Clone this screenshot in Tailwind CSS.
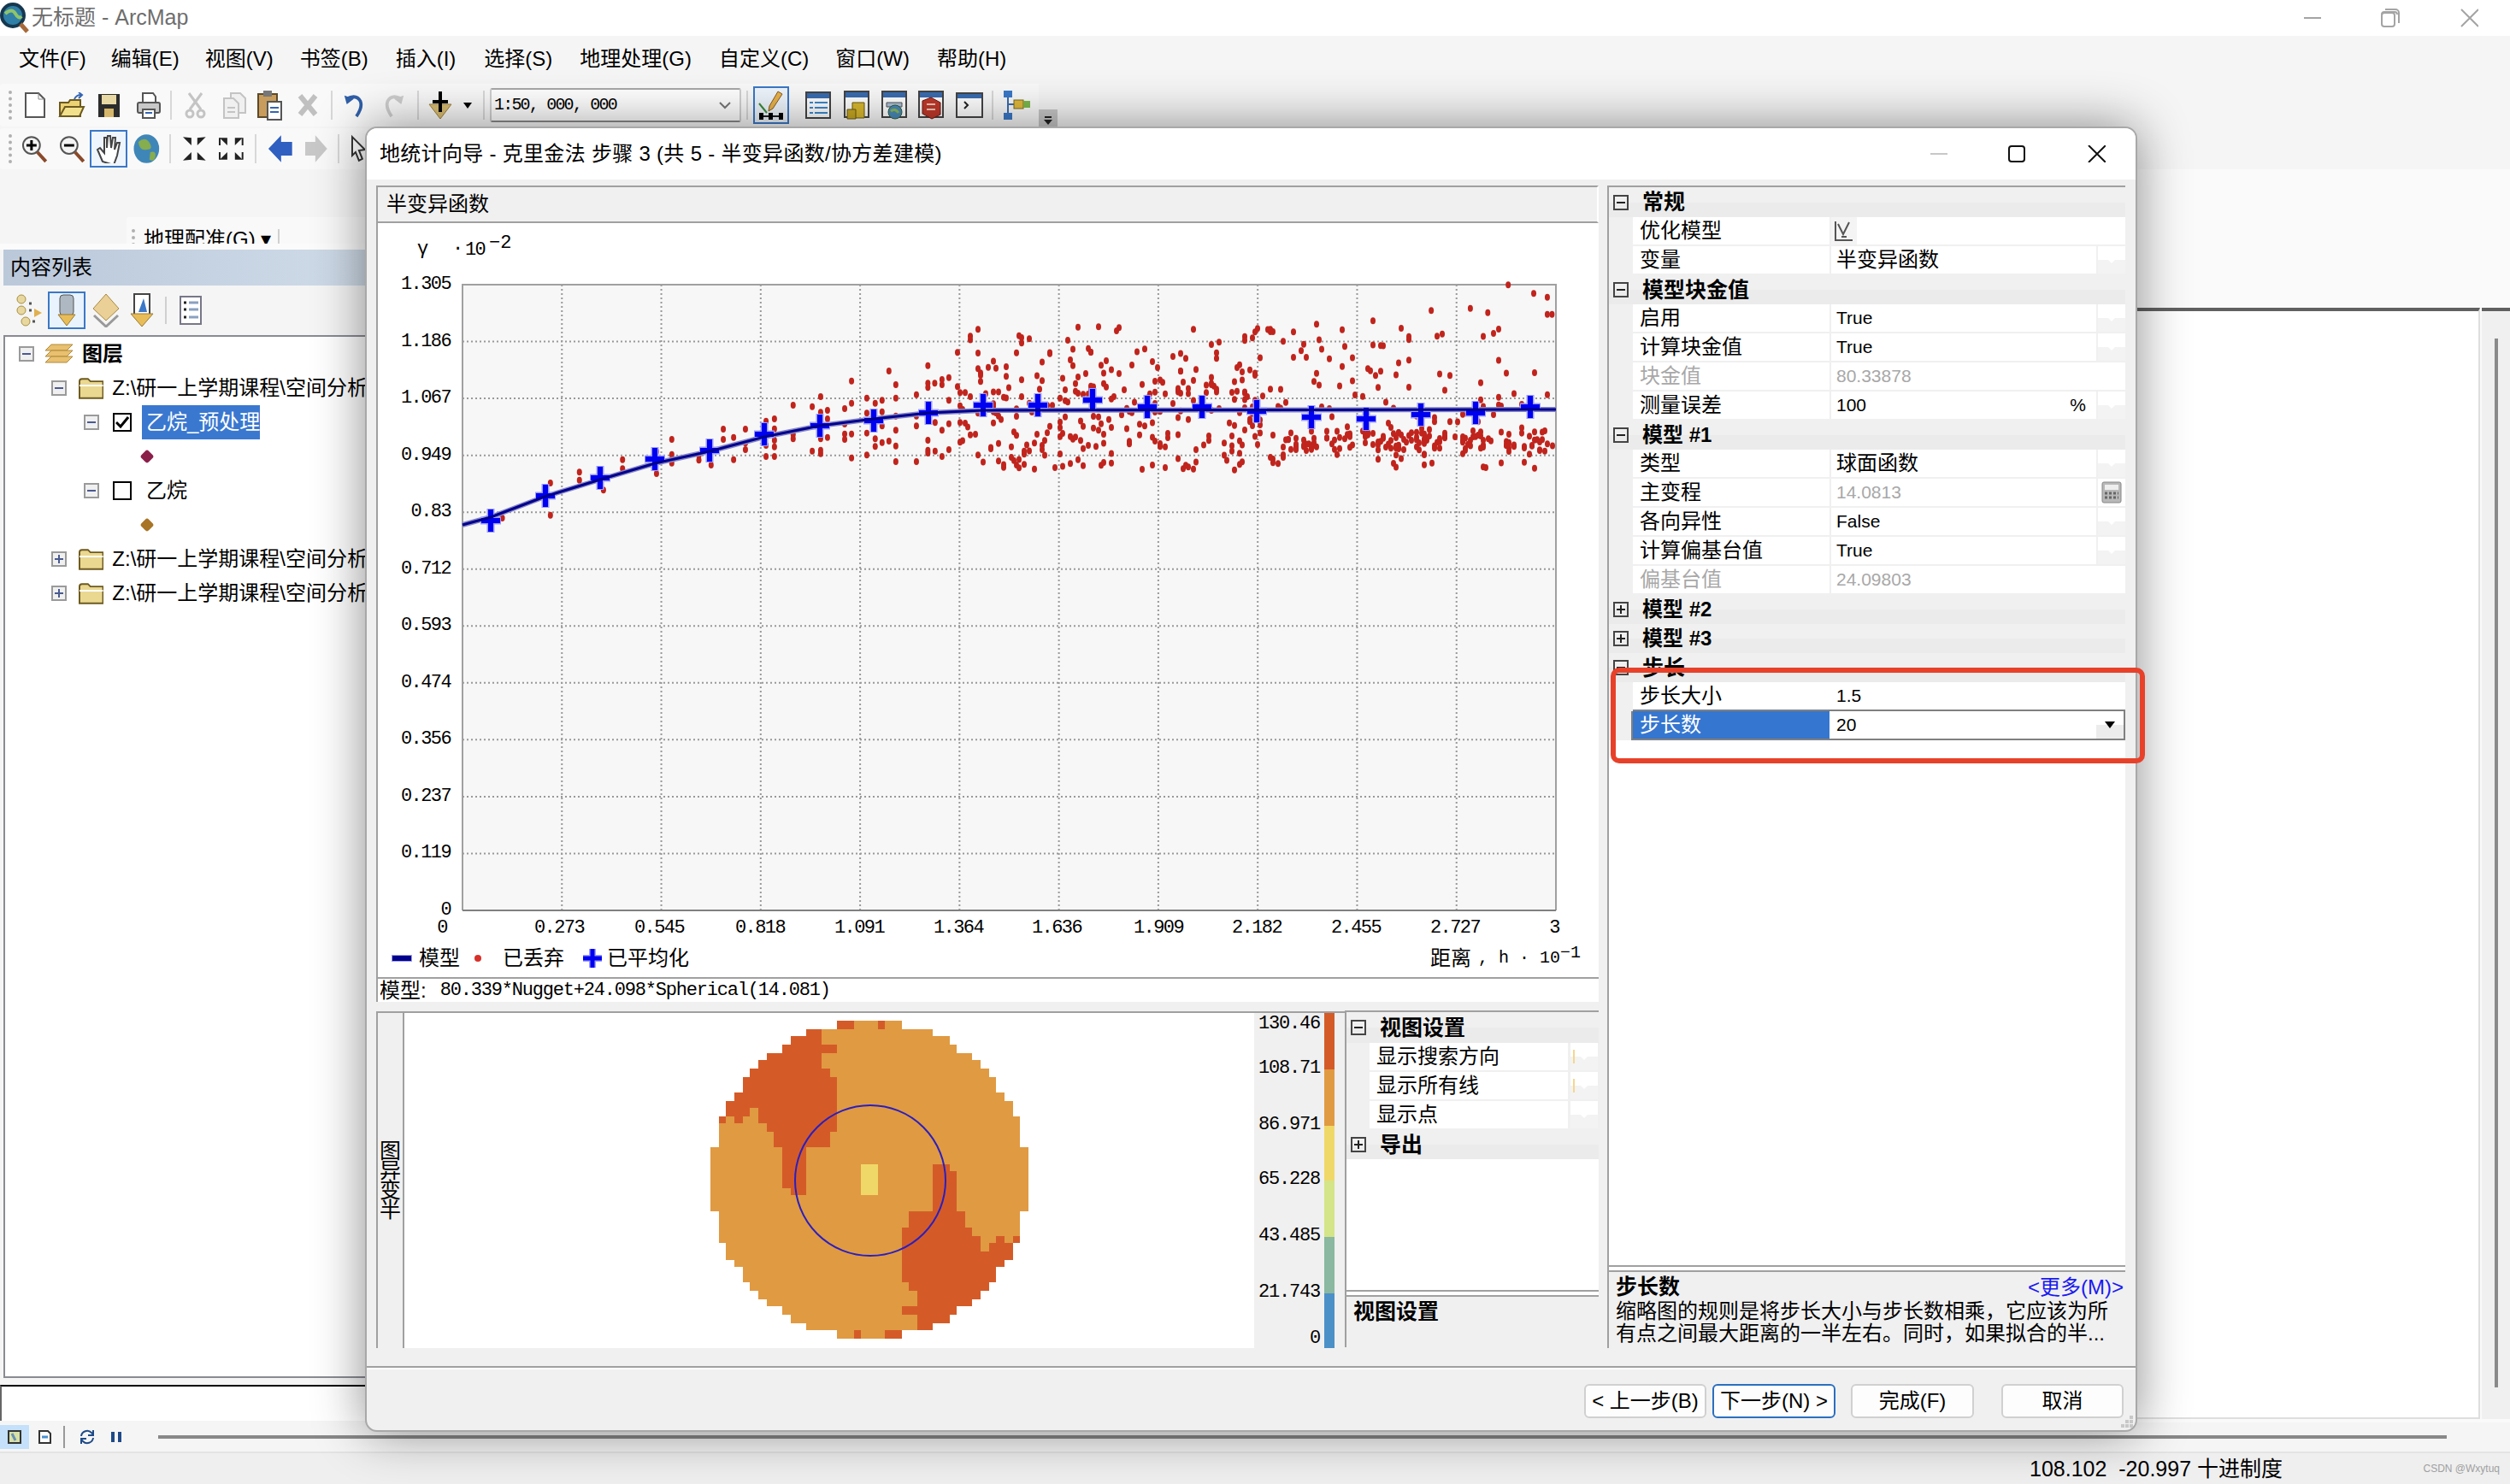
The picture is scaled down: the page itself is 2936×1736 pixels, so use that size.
<!DOCTYPE html>
<html lang="zh">
<head>
    <meta charset="UTF-8">
    <title>无标题 - ArcMap</title>
    <script src="https://cdn.jsdelivr.net/npm/@tailwindcss/browser@4"></script>
</head>
<body class="overflow-hidden bg-[#f0f0f0]">
<div class="relative flex h-[1736px] w-[2936px] flex-col overflow-hidden bg-[#f5f5f5] font-['Liberation_Sans','Noto_Sans_CJK_SC',sans-serif] text-[24px] leading-none text-black">

    <!-- title bar -->
    <div class="flex h-[42px] shrink-0 items-center bg-white pr-[37px]">
        <svg width="36" height="38" viewBox="0 0 36 38" class="shrink-0">
            <circle cx="15" cy="16" r="13" fill="#2f7fa8" stroke="#16384f" stroke-width="4"/>
            <path d="M6 14q8-7 12 0t7 3" fill="none" stroke="#8fc46a" stroke-width="4"/>
            <path d="M24 26l8 9" stroke="#a86a3a" stroke-width="5"/>
        </svg>
        <span class="mb-[2px] ml-[1px] text-[25px] text-[#6e6e6e]">无标题 - ArcMap</span>
        <svg width="204" height="22" viewBox="0 0 204 22" fill="none" stroke="#a4a4a4" stroke-width="2" class="ml-auto">
            <path d="M0 11h20"/>
            <path d="M91 7a3 3 0 0 1 3-3h12a3 3 0 0 1 3 3v0"/><path d="M95 1h12a4 4 0 0 1 4 4v12"/><rect x="91" y="5" width="15" height="16" rx="3"/>
            <path d="M184 1l20 20M204 1l-20 20"/>
        </svg>
    </div>

    <!-- menu -->
    <div class="flex h-[54px] shrink-0 items-center pl-[22px]">
        <span>文件(F)</span><span class="ml-[29px]">编辑(E)</span><span class="ml-[30px]">视图(V)</span><span class="ml-[31px]">书签(B)</span><span class="ml-[32px]">插入(I)</span><span class="ml-[33px]">选择(S)</span><span class="ml-[32px]">地理处理(G)</span><span class="ml-[32px]">自定义(C)</span><span class="ml-[31px]">窗口(W)</span><span class="ml-[32px]">帮助(H)</span>
    </div>

    <!-- standard toolbar -->
    <div class="mt-[2px] flex h-[50px] w-[1237px] shrink-0 items-center rounded-[3px] bg-[linear-gradient(90deg,#f9f9f9_1215px,transparent_1215px)] pl-[10px]">
        <span class="h-[34px] w-[4px] border-l-4 border-dotted border-[#b0b0b0]"></span>
        <svg width="26" height="30" viewBox="0 0 26 30" class="ml-[14px]"><path d="M2 1h15l7 7v21H2z" fill="#fff" stroke="#555" stroke-width="2"/><path d="M17 1v7h7" fill="none" stroke="#888"/></svg>
        <svg width="32" height="30" viewBox="0 0 32 30" class="ml-[14px]"><path d="M2 12h10l2-3h12v19H2z" fill="#ecd272" stroke="#6d5a20" stroke-width="2"/><path d="M2 28l6-11h22l-5 11z" fill="#f3e08c" stroke="#6d5a20" stroke-width="2"/><path d="M19 8q2-5 8-5M24 0l4 3-4 4" fill="none" stroke="#3565b5" stroke-width="2"/></svg>
        <svg width="27" height="30" viewBox="0 0 27 30" class="ml-[14px]"><path d="M1 2h25v27H1z" fill="#2c2c2c"/><rect x="5" y="3" width="17" height="11" fill="#e8d9a4"/><rect x="8" y="19" width="11" height="10" fill="#d6b66a"/></svg>
        <svg width="28" height="32" viewBox="0 0 28 32" class="ml-[19px]"><path d="M7 2h12l3 4v8H7z" fill="#fff" stroke="#555" stroke-width="2"/><rect x="1" y="13" width="26" height="12" rx="2" fill="#c8c8c8" stroke="#555" stroke-width="2"/><rect x="7" y="21" width="14" height="10" fill="#fff" stroke="#555" stroke-width="2"/><path d="M10 25h8" stroke="#3565b5" stroke-width="2"/></svg>
        <span class="ml-[11px] h-[34px] w-[2px] bg-[#d8d8d8]"></span>
        <svg width="27" height="32" viewBox="0 0 27 32" class="ml-[14px]" fill="none" stroke="#c4c4c4" stroke-width="3"><path d="M6 2l14 19M21 2L7 21"/><circle cx="7" cy="26" r="4"/><circle cx="20" cy="26" r="4"/></svg>
        <svg width="28" height="32" viewBox="0 0 28 32" class="ml-[18px]" fill="#f0f0f0" stroke="#c4c4c4" stroke-width="2"><path d="M10 2h11l6 6v17H10z"/><path d="M2 8h11l6 6v17H2z"/><path d="M6 19h9M6 24h9"/></svg>
        <svg width="30" height="36" viewBox="0 0 30 36" class="ml-[12px]"><rect x="2" y="5" width="22" height="27" fill="#c89c5c" stroke="#5c4a2a" stroke-width="2"/><rect x="8" y="1" width="10" height="7" fill="#777"/><path d="M13 14h16v21H13z" fill="#fff" stroke="#555" stroke-width="2"/><path d="M16 21h10M16 26h10" stroke="#3565b5" stroke-width="2"/></svg>
        <svg width="24" height="26" viewBox="0 0 24 26" class="ml-[18px]"><path d="M3 2l18 22M21 2L3 24" stroke="#c0c0c0" stroke-width="6"/></svg>
        <span class="ml-[15px] h-[34px] w-[2px] bg-[#d8d8d8]"></span>
        <svg width="30" height="30" viewBox="0 0 30 32" class="ml-[11px]"><path d="M5 8q12-6 17 3q3 8-5 19" fill="none" stroke="#2f5fa8" stroke-width="4"/><path d="M2 4l3 11 9-7z" fill="#2f5fa8"/></svg>
        <svg width="30" height="30" viewBox="0 0 30 32" class="ml-[15px]"><path d="M25 8Q13 2 8 11q-3 8 5 19" fill="none" stroke="#cdcdcd" stroke-width="4"/><path d="M28 4l-3 11-9-7z" fill="#cdcdcd"/></svg>
        <span class="ml-[13px] h-[34px] w-[2px] bg-[#d8d8d8]"></span>
        <svg width="30" height="32" viewBox="0 0 30 32" class="ml-[10px]"><path d="M2 15h26L15 32z" fill="#d9bd72" stroke="#a08040"/><path d="M15 0v24M6 12h18" stroke="#000" stroke-width="4"/></svg>
        <span class="ml-[12px] h-0 w-0 border-x-[5px] border-t-[7px] border-x-transparent border-t-black"></span>
        <span class="ml-[13px] h-[34px] w-[2px] bg-[#d8d8d8]"></span>
        <div class="ml-[6px] flex h-[40px] w-[294px] items-center justify-between rounded-[3px] border-2 border-b-[#8a8a8a] border-l-[#cfcfcf] border-r-[#cfcfcf] border-t-[#a8a8a8] bg-white pl-[3px] pr-[10px] font-['Liberation_Mono',monospace] text-[20px] tracking-[-1.8px]">
            <span>1:50, 000, 000</span>
            <svg width="14" height="9" viewBox="0 0 14 9" fill="none" stroke="#777" stroke-width="2"><path d="M1 1l6 6 6-6"/></svg>
        </div>
        <span class="ml-[6px] h-[34px] w-[2px] bg-[#d8d8d8]"></span>
        <div class="ml-[6px] flex h-[44px] w-[42px] items-center justify-center border-2 border-[#3a78c8] bg-[#eef5fc]">
            <svg width="32" height="36" viewBox="0 0 32 36"><path d="M2 31h28" stroke="#222" stroke-width="2"/><rect x="2" y="27" width="5" height="8"/><rect x="13" y="27" width="5" height="8"/><rect x="25" y="27" width="5" height="8"/><path d="M24 2l5 3-11 17-5 3 1-6z" fill="#e8b34a" stroke="#8a5a20"/><path d="M2 16l9 11" stroke="#3a8a3a" stroke-width="2"/></svg>
        </div>
        <svg width="30" height="32" viewBox="0 0 30 32" class="ml-[19px]"><rect x="1" y="1" width="28" height="30" fill="#fff" stroke="#444" stroke-width="2"/><rect x="2" y="2" width="26" height="6" fill="#3a6cb0"/><path d="M5 13h4M5 19h4M5 25h4M11 13h15M11 19h15M11 25h15" stroke="#3a8ad0" stroke-width="2"/></svg>
        <svg width="30" height="34" viewBox="0 0 30 34" class="ml-[15px]"><rect x="1" y="1" width="28" height="30" fill="#fff" stroke="#444" stroke-width="2"/><rect x="2" y="2" width="26" height="6" fill="#3a6cb0"/><path d="M10 14h14v18H10z" fill="#d9b82e" stroke="#6a5a10"/><path d="M4 22h10v11H4z" fill="#c8a822" stroke="#6a5a10"/></svg>
        <svg width="32" height="34" viewBox="0 0 32 34" class="ml-[13px]"><rect x="2" y="1" width="28" height="30" fill="#fff" stroke="#444" stroke-width="2"/><rect x="3" y="2" width="26" height="6" fill="#3a6cb0"/><path d="M7 14h18v5H7z" fill="#aac0d8" stroke="#555"/><circle cx="17" cy="25" r="8" fill="#4a8ab8" stroke="#2f5f3a"/><path d="M12 24q5-4 9 2" stroke="#8ab85a" stroke-width="3" fill="none"/></svg>
        <svg width="32" height="34" viewBox="0 0 32 34" class="ml-[11px]"><rect x="2" y="1" width="28" height="30" fill="#fff" stroke="#444" stroke-width="2"/><rect x="3" y="2" width="26" height="6" fill="#3a6cb0"/><path d="M6 12l10-4 11 6v14l-10 5-11-6z" fill="#c0392b" stroke="#6a1a14"/><path d="M11 16h10M11 22h10" stroke="#f0c8b8" stroke-width="2"/></svg>
        <svg width="32" height="30" viewBox="0 0 32 30" class="ml-[13px]"><rect x="1" y="1" width="30" height="28" fill="#fff" stroke="#444" stroke-width="2"/><rect x="2" y="2" width="28" height="5" fill="#3a6cb0"/><path d="M10 11l4 4-4 4" fill="none" stroke="#222" stroke-width="2"/></svg>
        <span class="ml-[10px] h-[34px] w-[2px] bg-[#d8d8d8]"></span>
        <svg width="34" height="36" viewBox="0 0 34 36" class="ml-[10px]"><path d="M7 2v28M7 17h18" stroke="#3a6cb0" stroke-width="2"/><rect x="2" y="1" width="10" height="8" fill="#3a78c8"/><rect x="2" y="27" width="10" height="8" fill="#3a78c8"/><rect x="14" y="12" width="11" height="10" fill="#e0b83c" stroke="#7a6a1a"/><rect x="25" y="13" width="8" height="8" fill="#7ab84c"/></svg>
        <div class="ml-[9px] flex h-[20px] w-[22px] flex-col items-center justify-end gap-[2px] self-end bg-[#c8c8c8] pb-[2px]">
            <span class="h-[2px] w-[8px] bg-[#222]"></span>
            <span class="h-0 w-0 border-x-[5px] border-t-[6px] border-x-transparent border-t-[#222]"></span>
        </div>
    </div>

    <!-- tools toolbar -->
    <div class="mt-[2px] flex h-[48px] w-[430px] shrink-0 items-center rounded-[3px] bg-[#f9f9f9] pl-[10px]">
        <span class="h-[34px] w-[4px] border-l-4 border-dotted border-[#b0b0b0]"></span>
        <svg width="32" height="34" viewBox="0 0 32 34" class="ml-[10px]"><circle cx="13" cy="13" r="10" fill="#f4f4f4" stroke="#555" stroke-width="2"/><path d="M13 7v12M7 13h12" stroke="#000" stroke-width="3"/><path d="M20 21l10 11" stroke="#8a4a2a" stroke-width="4"/></svg>
        <svg width="32" height="34" viewBox="0 0 32 34" class="ml-[12px]"><circle cx="13" cy="13" r="10" fill="#f4f4f4" stroke="#555" stroke-width="2"/><path d="M7 13h12" stroke="#000" stroke-width="3"/><path d="M20 21l10 11" stroke="#8a4a2a" stroke-width="4"/></svg>
        <div class="ml-[6px] flex h-[44px] w-[44px] items-center justify-center border-2 border-[#3a78c8] bg-[#eef5fc]">
            <svg width="30" height="34" viewBox="0 0 30 34" fill="#fff" stroke="#444" stroke-width="2"><path d="M8 32L2 18l3-2 5 6V4h3v12l1-14h3l1 14 2-12h3l-1 14 3-8h3l-3 15-4 11z"/></svg>
        </div>
        <svg width="31" height="36" viewBox="0 0 31 36" class="ml-[7px]"><ellipse cx="15.500" cy="18" rx="15" ry="17" fill="#3f86b8"/><path d="M6 10q8-7 13 1t-3 8q-9 2-10-9M20 22q7-2 6 5t-7 4z" fill="#86ad4e"/></svg>
        <span class="ml-[11px] h-[34px] w-[2px] bg-[#d8d8d8]"></span>
        <svg width="29" height="30" viewBox="0 0 29 30" class="ml-[13px]"><path d="M1 1l10 10V2zM28 1L18 11V2zM1 29l10-10v9zM28 29L18 19v9z" fill="#222"/></svg>
        <svg width="31" height="30" viewBox="0 0 31 30" class="ml-[14px]"><path d="M11 11L2 2h9zM20 11l9-9h-9zM11 19l-9 9h9zM20 19l9 9h-9z" fill="#222"/><path d="M2 2v9M29 2v9M2 19v9M29 19v9" stroke="#222" stroke-width="2"/></svg>
        <span class="ml-[12px] h-[34px] w-[2px] bg-[#d8d8d8]"></span>
        <svg width="30" height="34" viewBox="0 0 30 34" class="ml-[13px]"><path d="M16 1v8h13v16H16v8L1 17z" fill="#2f5fc0"/></svg>
        <svg width="28" height="34" viewBox="0 0 28 34" class="ml-[13px]"><path d="M13 1v8H1v16h12v8l14-16z" fill="#c8c8c8"/></svg>
        <span class="ml-[12px] h-[34px] w-[2px] bg-[#d8d8d8]"></span>
        <svg width="20" height="34" viewBox="0 0 20 34" class="ml-[13px]"><path d="M2 3l15 15-7 1 4 10-4 2-4-10-4 4z" fill="#fff" stroke="#333" stroke-width="2"/></svg>
    </div>

    <!-- body under the toolbars -->
    <div class="flex h-[1466px] shrink-0">
        <!-- table of contents -->
        <div class="flex w-[430px] shrink-0 flex-col">
            <div class="ml-[148px] mt-[56px] flex h-[31px] shrink-0 overflow-hidden rounded-t-[3px] bg-[#f9f9f9] pl-[6px] pt-[14px]">
                <span class="h-[28px] w-[4px] border-l-4 border-dotted border-[#b0b0b0]"></span>
                <span class="ml-[10px] whitespace-nowrap">地理配准(G) ▾</span>
                <span class="ml-[8px] h-[24px] w-[2px] bg-[#d0d0d0]"></span>
            </div>
            <div class="h-[7px] shrink-0 bg-[#fbfbfb]"></div>
            <div class="ml-[4px] flex h-[42px] shrink-0 items-center bg-[linear-gradient(90deg,#bac8da,#cfdbe8)] pl-[8px]">内容列表</div>
            <div class="flex h-[58px] shrink-0 items-center bg-[#f5f5f5] pl-[18px]">
                <svg width="32" height="40" viewBox="0 0 32 40"><circle cx="7" cy="7" r="5" fill="#e8d8a0" stroke="#a89040"/><circle cx="7" cy="20" r="5" fill="#e8d8a0" stroke="#a89040"/><circle cx="12" cy="33" r="5" fill="#e8d8a0" stroke="#a89040"/><path d="M16 12h3M16 20h3M20 33h3" stroke="#555" stroke-width="3"/><path d="M22 18l9 5-9 5z" fill="#e0b050"/></svg>
                <div class="ml-[6px] flex h-[44px] w-[44px] items-center justify-center border-2 border-[#3a78c8] bg-[#e8f3fd]">
                    <svg width="28" height="38" viewBox="0 0 28 38"><rect x="6" y="1" width="16" height="24" rx="4" fill="#aeb8c2" stroke="#555"/><path d="M4 24h20L14 37z" fill="#e8bd58" stroke="#9a7a30"/></svg>
                </div>
                <svg width="32" height="40" viewBox="0 0 32 40" class="ml-[8px]"><path d="M16 1l15 17-15 14L1 18z" fill="#ead096" stroke="#a88a40"/><path d="M2 26l14 13 14-13" fill="none" stroke="#999" stroke-width="3"/></svg>
                <svg width="32" height="40" viewBox="0 0 32 40" class="ml-[10px]"><rect x="7" y="1" width="18" height="24" fill="#fff" stroke="#444" stroke-width="2"/><path d="M12 22l6-16 4 16z" fill="#3a78c8"/><path d="M3 24h26L16 39z" fill="#e8bd58" stroke="#9a7a30"/></svg>
                <span class="ml-[11px] h-[32px] w-[2px] bg-[#d0d0d0]"></span>
                <svg width="26" height="34" viewBox="0 0 26 34" class="ml-[15px]"><rect x="1" y="1" width="24" height="32" fill="#fff" stroke="#778" stroke-width="2"/><path d="M5 8h3M5 16h3M5 25h3" stroke="#222" stroke-width="3"/><path d="M11 8h11M11 16h11M11 25h11" stroke="#8aa0c0" stroke-width="3"/></svg>
            </div>
            <div class="ml-[4px] h-[1220px] shrink-0 overflow-hidden border-2 border-r-0 border-[#8a8a94] bg-white">
                <div class="flex h-[40px] items-center whitespace-nowrap pl-[16px]">
                    <span class="flex h-[18px] w-[18px] items-center justify-center border-2 border-[#9a9a9a] bg-[#f0f0f0]"><span class="h-[2px] w-[10px] bg-[#4a5a90]"></span></span>
                    <svg width="34" height="28" viewBox="0 0 34 28" class="ml-[12px]"><path d="M8 3h25l-7 7H1z" fill="#e8c070" stroke="#b08a3a"/><path d="M8 10h25l-7 7H1z" fill="#e8c070" stroke="#b08a3a"/><path d="M8 17h25l-7 7H1z" fill="#e8c070" stroke="#b08a3a"/></svg>
                    <span class="ml-[10px] font-bold">图层</span>
                </div>
                <div class="flex h-[40px] items-center whitespace-nowrap pl-[54px]">
                    <span class="flex h-[18px] w-[18px] items-center justify-center border-2 border-[#9a9a9a] bg-[#f0f0f0]"><span class="h-[2px] w-[10px] bg-[#4a5a90]"></span></span>
                    <svg width="30" height="26" viewBox="0 0 30 26" class="ml-[14px]"><path d="M1 5q0-3 3-3h7l3 3h15v20H1z" fill="#ead890" stroke="#6d5a20" stroke-width="2"/><path d="M1 10h28" stroke="#fff" stroke-width="2"/></svg>
                    <span class="ml-[10px]">Z:\研一上学期课程\空间分析</span>
                </div>
                <div class="flex h-[40px] items-center whitespace-nowrap pl-[92px]">
                    <span class="flex h-[18px] w-[18px] items-center justify-center border-2 border-[#9a9a9a] bg-[#f0f0f0]"><span class="h-[2px] w-[10px] bg-[#4a5a90]"></span></span>
                    <span class="ml-[16px] flex h-[22px] w-[22px] items-center justify-center border-2 border-black"><svg width="16" height="14" viewBox="0 0 16 14"><path d="M1 7l5 5 9-11" fill="none" stroke="#000" stroke-width="3"/></svg></span>
                    <span class="ml-[12px] flex h-[40px] w-[138px] items-center bg-[#3a78d0] pl-[5px] text-white">乙烷_预处理</span>
                </div>
                <div class="flex h-[40px] items-center pl-[160px]"><span class="h-[12px] w-[12px] rotate-45 rounded-[3px] bg-[#8a1f4a]"></span></div>
                <div class="flex h-[40px] items-center whitespace-nowrap pl-[92px]">
                    <span class="flex h-[18px] w-[18px] items-center justify-center border-2 border-[#9a9a9a] bg-[#f0f0f0]"><span class="h-[2px] w-[10px] bg-[#4a5a90]"></span></span>
                    <span class="ml-[16px] h-[22px] w-[22px] border-2 border-black"></span>
                    <span class="ml-[17px]">乙烷</span>
                </div>
                <div class="flex h-[40px] items-center pl-[160px]"><span class="h-[12px] w-[12px] rotate-45 rounded-[3px] bg-[#a87426]"></span></div>
                <div class="flex h-[40px] items-center whitespace-nowrap pl-[54px]">
                    <span class="relative flex h-[18px] w-[18px] items-center justify-center border-2 border-[#9a9a9a] bg-[#f0f0f0]"><span class="h-[2px] w-[10px] bg-[#4a5a90]"></span><span class="absolute h-[10px] w-[2px] bg-[#4a5a90]"></span></span>
                    <svg width="30" height="26" viewBox="0 0 30 26" class="ml-[14px]"><path d="M1 5q0-3 3-3h7l3 3h15v20H1z" fill="#ead890" stroke="#6d5a20" stroke-width="2"/><path d="M1 10h28" stroke="#fff" stroke-width="2"/></svg>
                    <span class="ml-[10px]">Z:\研一上学期课程\空间分析</span>
                </div>
                <div class="flex h-[40px] items-center whitespace-nowrap pl-[54px]">
                    <span class="relative flex h-[18px] w-[18px] items-center justify-center border-2 border-[#9a9a9a] bg-[#f0f0f0]"><span class="h-[2px] w-[10px] bg-[#4a5a90]"></span><span class="absolute h-[10px] w-[2px] bg-[#4a5a90]"></span></span>
                    <svg width="30" height="26" viewBox="0 0 30 26" class="ml-[14px]"><path d="M1 5q0-3 3-3h7l3 3h15v20H1z" fill="#ead890" stroke="#6d5a20" stroke-width="2"/><path d="M1 10h28" stroke="#fff" stroke-width="2"/></svg>
                    <span class="ml-[10px]">Z:\研一上学期课程\空间分析</span>
                </div>
            </div>
            <div class="mt-[8px] h-[42px] shrink-0 border-l-2 border-t-2 border-l-[#666] border-t-black bg-white"></div>
        </div>
        <!-- map area -->
        <div class="flex min-w-0 flex-1 flex-col bg-[#fafafa]">
            <div class="mt-[162px] flex h-[1300px] shrink-0">
                <div class="w-[2471px] shrink-0 border-b-2 border-r-2 border-t-4 border-b-[#dedede] border-r-[#dedede] border-t-[#606060] bg-white"></div>
                <div class="ml-[2px] flex-1 border-t-4 border-t-[#606060] bg-[#f0f0f0] pl-[15px] pt-[32px]"><div class="h-[1227px] w-[4px] bg-[#8a8a8a]"></div></div>
            </div>
        </div>
    </div>

    <!-- layout / data view bar -->
    <div class="flex h-[36px] shrink-0 items-center border-b-2 border-b-[#e4e4e4]">
        <div class="flex h-[28px] w-[34px] items-center justify-center border-2 border-[#c4e0fa] bg-[#c4e0fa]"><svg width="16" height="16" viewBox="0 0 16 16"><rect x="1" y="1" width="14" height="14" fill="#d8e0a8" stroke="#333" stroke-width="2"/><path d="M5 4l4 8" stroke="#6a90b0" stroke-width="3"/></svg></div>
        <svg width="15" height="16" viewBox="0 0 15 16" class="ml-[11px]"><path d="M1 1h10l3 3v11H1z" fill="#fff" stroke="#333" stroke-width="2"/><path d="M4 8h7" stroke="#4a90d0" stroke-width="3"/></svg>
        <span class="ml-[14px] h-[26px] w-[2px] bg-[#999]"></span>
        <svg width="18" height="18" viewBox="0 0 18 18" fill="none" stroke="#1f4a88" stroke-width="2" class="ml-[17px]"><path d="M2 8a7 7 0 0 1 12-4l2 2M16 10a7 7 0 0 1-12 4l-2-2"/><path d="M16 1v6h-6M2 17v-6h6"/></svg>
        <span class="ml-[19px] h-[12px] w-[4px] bg-[#1f4a88]"></span><span class="ml-[4px] h-[12px] w-[4px] bg-[#1f4a88]"></span>
        <div class="ml-[43px] h-[4px] w-[2677px] bg-[#888]"></div>
    </div>

    <!-- status bar -->
    <div class="flex flex-1 items-center bg-[#efefef] pl-[2374px] pr-[12px]">
        <span class="whitespace-nowrap text-[25px]">108.102&nbsp; -20.997 十进制度</span>
        <span class="ml-auto text-[12px] text-[#a0a0a0]">CSDN @Wxytuq</span>
    </div>

    <!-- geostatistical wizard dialog -->
    <div class="absolute left-[427px] top-[148px] flex h-[1527px] w-[2073px] flex-col overflow-hidden rounded-[14px] border-2 border-[#a8a8a8] bg-[#f0f0f0] shadow-[0_0_60px_rgba(0,0,0,0.45)]">
        <div class="flex h-[60px] shrink-0 items-center bg-white pl-[15px]">
            <span class="tracking-[0.3px]">地统计向导 - 克里金法 步骤 3 (共 5 - 半变异函数/协方差建模)</span>
            <svg width="205" height="20" viewBox="0 0 205 20" fill="none" stroke="#111" stroke-width="2" class="ml-auto mr-[35px]"><path d="M0 10h20" stroke="#c8c8c8"/><rect x="92" y="1" width="18" height="18" rx="3"/><path d="M185 0l20 20M205 0l-20 20"/></svg>
        </div>

        <div class="mt-[7px] flex h-[1360px] shrink-0 pl-[11px]">
            <!-- left column -->
            <div class="flex w-[1430px] shrink-0 flex-col">
                <div class="flex h-[44px] shrink-0 items-center border-2 border-[#a0a0a0] border-r-white bg-[#f0f0f0] pl-[10px]">半变异函数</div>
                <div class="w-[1430px] shrink-0 border-l-2 border-[#a0a0a0] bg-white">
                    <svg id="chart" width="1428" height="837" viewBox="442 261 1428 837" class="block"></svg>
                    <div class="flex h-[45px] items-center whitespace-nowrap">
                        <span class="ml-[17px] h-[6px] w-[22px] bg-[#00008c] outline outline-[#a0a0e0]"></span>
                        <span class="ml-[9px]">模型</span>
                        <span class="ml-[17px] h-[8px] w-[8px] rounded-full bg-[#d8302a]"></span>
                        <span class="ml-[25px]">已丢弃</span>
                        <svg width="24" height="24" viewBox="0 0 24 24" class="ml-[21px]"><path d="M12 1v22M1 12h22" stroke="#a0a0ff" stroke-width="8"/><path d="M12 1v22M1 12h22" stroke="#0000f0" stroke-width="5"/></svg>
                        <span class="ml-[5px]">已平均化</span>
                        <span class="ml-[867px]">距离</span>
                        <span class="ml-[8px] font-['Liberation_Mono',monospace] text-[20px]">, h · 10</span>
                        <span class="mb-[12px] font-['Liberation_Mono',monospace] text-[20px]">&minus;1</span>
                    </div>
                </div>
                <div class="flex h-[29px] shrink-0 items-center whitespace-nowrap border-l-2 border-t-2 border-l-[#a0a0a0] border-t-[#a0a0a0] bg-white pl-[2px]">
                    <span>模型:</span>
                    <span class="ml-[16px] font-['Liberation_Mono',monospace] text-[22px] tracking-[-1.2px]">80.339*Nugget+24.098*Spherical(14.081)</span>
                </div>
                <div class="mt-[11px] flex h-[394px] shrink-0 border-t-2 border-[#a0a0a0]">
                    <div class="flex w-[33px] shrink-0 flex-col items-center justify-center border-x-2 border-l-[#a0a0a0] border-r-[#a0a0a0] bg-[#f0f0f0] text-[25px] leading-[23px]">
                        <span>图</span><span>异</span><span>变</span><span>半</span>
                    </div>
                    <svg id="map" width="994" height="392" viewBox="474 1185 994 392" class="block shrink-0 bg-white"></svg>
                    <div class="relative w-[82px] shrink-0 bg-[#f0f0f0] font-['Liberation_Mono',monospace] text-[22px] tracking-[-1.2px]">
                        <span class="absolute right-[5px] top-[2px]">130.46</span>
                        <span class="absolute right-[5px] top-[54px]">108.71</span>
                        <span class="absolute right-[5px] top-[120px]">86.971</span>
                        <span class="absolute right-[5px] top-[184px]">65.228</span>
                        <span class="absolute right-[5px] top-[250px]">43.485</span>
                        <span class="absolute right-[5px] top-[316px]">21.743</span>
                        <span class="absolute right-[5px] top-[370px]">0</span>
                    </div>
                    <div class="flex w-[12px] shrink-0 flex-col">
                        <span class="h-[66px] bg-[#d45b28]"></span><span class="h-[66px] bg-[#e09a42]"></span><span class="h-[64px] bg-[#f0d868]"></span><span class="h-[66px] bg-[#d4e488]"></span><span class="h-[66px] bg-[#8ab8a0]"></span><span class="h-[64px] bg-[#4c90c8]"></span>
                    </div>
                </div>
            </div>

            <!-- view settings, placed beside the colour bar -->
            <div class="absolute left-[1144px] top-[1032px] flex h-[394px] w-[297px] flex-col border-l-2 border-t-2 border-[#a0a0a0] bg-white">
                <div class="flex h-[36px] shrink-0 items-center bg-[linear-gradient(#f0f0f0_50%,#ebebeb_50%)] pl-[5px] text-[25px] font-bold"><span class="flex h-[18px] w-[18px] items-center justify-center border-2 border-[#444]"><span class="h-[2px] w-[10px] bg-[#222]"></span></span><span class="ml-[16px]">视图设置</span></div>
                <div class="bg-[#f0f0f0] pl-[27px]">
                    <div class="flex h-[34px] border-b-2 border-[#f0f0f0]"><div class="w-[232px] bg-white pl-[8px] leading-[32px]">显示搜索方向</div><div class="relative ml-[3px] flex w-[32px] items-center justify-center bg-[linear-gradient(#fff_50%,#f3f3f3_50%)]"><span class="absolute left-[3px] h-[16px] w-[2px] bg-[#f5d78e]"></span><span class="h-0 w-0 border-x-[7px] border-t-[7px] border-x-transparent border-t-white"></span></div></div>
                    <div class="flex h-[34px] border-b-2 border-[#f0f0f0]"><div class="w-[232px] bg-white pl-[8px] leading-[32px]">显示所有线</div><div class="relative ml-[3px] flex w-[32px] items-center justify-center bg-[linear-gradient(#fff_50%,#f3f3f3_50%)]"><span class="absolute left-[3px] h-[16px] w-[2px] bg-[#f5d78e]"></span><span class="h-0 w-0 border-x-[7px] border-t-[7px] border-x-transparent border-t-white"></span></div></div>
                    <div class="flex h-[34px] border-b-2 border-[#f0f0f0]"><div class="w-[232px] bg-white pl-[8px] leading-[32px]">显示点</div><div class="ml-[3px] flex w-[32px] items-center justify-center bg-[linear-gradient(#fff_50%,#f3f3f3_50%)]"><span class="h-0 w-0 border-x-[7px] border-t-[7px] border-x-transparent border-t-white"></span></div></div>
                </div>
                <div class="flex h-[34px] shrink-0 items-center bg-[linear-gradient(#f0f0f0_50%,#ebebeb_50%)] pl-[5px] text-[25px] font-bold"><span class="relative flex h-[18px] w-[18px] items-center justify-center border-2 border-[#444]"><span class="h-[2px] w-[10px] bg-[#222]"></span><span class="absolute h-[10px] w-[2px] bg-[#222]"></span></span><span class="ml-[16px]">导出</span></div>
                <div class="flex-1"></div>
                <div class="h-[8px] shrink-0 border-y-2 border-[#a0a0a0] bg-white"></div>
                <div class="h-[59px] shrink-0 bg-[#f0f0f0] pl-[8px] pt-[5px] text-[25px] font-bold">视图设置</div>
            </div>

            <!-- properties column -->
            <div class="ml-[10px] flex w-[606px] shrink-0 flex-col border-l-2 border-t-2 border-[#a0a0a0] bg-white">
                <div class="bg-[#f0f0f0]">
                    <div class="flex h-[35px] items-center bg-[linear-gradient(#f0f0f0_50%,#ebebeb_50%)] pl-[5px] font-bold"><span class="flex h-[18px] w-[18px] items-center justify-center border-2 border-[#444]"><span class="h-[2px] w-[10px] bg-[#222]"></span></span><span class="ml-[16px] text-[25px]">常规</span></div>
                    <div class="ml-[28px] flex h-[34px] border-b-2 border-[#f0f0f0]"><div class="w-[230px] bg-white pl-[8px] leading-[32px]">优化模型</div><div class="ml-[2px] flex flex-1 bg-white"><div class="flex w-[30px] items-center justify-center bg-[#f4f4f4]"><svg width="24" height="26" viewBox="0 0 24 26" fill="none" stroke="#555"><path d="M2 2v22h20" stroke-width="2"/><path d="M5 5l6 12 7-14M9 20h6" stroke-width="2"/></svg></div></div></div>
                    <div class="ml-[28px] flex h-[34px] border-b-2 border-[#f0f0f0]"><div class="w-[230px] bg-white pl-[8px] leading-[32px]">变量</div><div class="ml-[2px] w-[310px] bg-white pl-[6px] leading-[32px]">半变异函数</div><div class="ml-[2px] flex w-[32px] items-center justify-center bg-[linear-gradient(#fff_50%,#f3f3f3_50%)]"><span class="h-0 w-0 border-x-[7px] border-t-[7px] border-x-transparent border-t-white"></span></div></div>
                    <div class="flex h-[34px] items-center bg-[linear-gradient(#f0f0f0_50%,#ebebeb_50%)] pl-[5px] font-bold"><span class="flex h-[18px] w-[18px] items-center justify-center border-2 border-[#444]"><span class="h-[2px] w-[10px] bg-[#222]"></span></span><span class="ml-[16px] text-[25px]">模型块金值</span></div>
                    <div class="ml-[28px] flex h-[34px] border-b-2 border-[#f0f0f0]"><div class="w-[230px] bg-white pl-[8px] leading-[32px]">启用</div><div class="ml-[2px] w-[310px] bg-white pl-[6px] text-[21px] leading-[32px]">True</div><div class="ml-[2px] flex w-[32px] items-center justify-center bg-[linear-gradient(#fff_50%,#f3f3f3_50%)]"><span class="h-0 w-0 border-x-[7px] border-t-[7px] border-x-transparent border-t-white"></span></div></div>
                    <div class="ml-[28px] flex h-[34px] border-b-2 border-[#f0f0f0]"><div class="w-[230px] bg-white pl-[8px] leading-[32px]">计算块金值</div><div class="ml-[2px] w-[310px] bg-white pl-[6px] text-[21px] leading-[32px]">True</div><div class="ml-[2px] flex w-[32px] items-center justify-center bg-[linear-gradient(#fff_50%,#f3f3f3_50%)]"><span class="h-0 w-0 border-x-[7px] border-t-[7px] border-x-transparent border-t-white"></span></div></div>
                    <div class="ml-[28px] flex h-[34px] border-b-2 border-[#f0f0f0] text-[#a8a8a8]"><div class="w-[230px] bg-white pl-[8px] leading-[32px]">块金值</div><div class="ml-[2px] flex-1 bg-white pl-[6px] text-[21px] leading-[32px]">80.33878</div></div>
                    <div class="ml-[28px] flex h-[34px] border-b-2 border-[#f0f0f0]"><div class="w-[230px] bg-white pl-[8px] leading-[32px]">测量误差</div><div class="ml-[2px] flex w-[310px] justify-between bg-white pl-[6px] pr-[12px] text-[21px] leading-[32px]"><span>100</span><span>%</span></div><div class="ml-[2px] flex w-[32px] items-center justify-center bg-[linear-gradient(#fff_50%,#f3f3f3_50%)]"><span class="h-0 w-0 border-x-[7px] border-t-[7px] border-x-transparent border-t-white"></span></div></div>
                    <div class="flex h-[34px] items-center bg-[linear-gradient(#f0f0f0_50%,#ebebeb_50%)] pl-[5px] font-bold"><span class="flex h-[18px] w-[18px] items-center justify-center border-2 border-[#444]"><span class="h-[2px] w-[10px] bg-[#222]"></span></span><span class="ml-[16px]">模型 #1</span></div>
                    <div class="ml-[28px] flex h-[34px] border-b-2 border-[#f0f0f0]"><div class="w-[230px] bg-white pl-[8px] leading-[32px]">类型</div><div class="ml-[2px] w-[310px] bg-white pl-[6px] leading-[32px]">球面函数</div><div class="ml-[2px] flex w-[32px] items-center justify-center bg-[linear-gradient(#fff_50%,#f3f3f3_50%)]"><span class="h-0 w-0 border-x-[7px] border-t-[7px] border-x-transparent border-t-white"></span></div></div>
                    <div class="ml-[28px] flex h-[34px] border-b-2 border-[#f0f0f0]"><div class="w-[230px] bg-white pl-[8px] leading-[32px]">主变程</div><div class="ml-[2px] w-[310px] bg-white pl-[6px] text-[21px] leading-[32px] text-[#a8a8a8]">14.0813</div><div class="ml-[2px] flex w-[32px] items-center justify-center bg-white"><svg width="24" height="26" viewBox="0 0 24 26"><rect x="1" y="1" width="22" height="24" rx="2" fill="#b8b8b8" stroke="#888"/><rect x="4" y="4" width="16" height="6" fill="#eee"/><path d="M4 14h16M4 19h16" stroke="#666" stroke-width="3" stroke-dasharray="3 2"/></svg></div></div>
                    <div class="ml-[28px] flex h-[34px] border-b-2 border-[#f0f0f0]"><div class="w-[230px] bg-white pl-[8px] leading-[32px]">各向异性</div><div class="ml-[2px] w-[310px] bg-white pl-[6px] text-[21px] leading-[32px]">False</div><div class="ml-[2px] flex w-[32px] items-center justify-center bg-[linear-gradient(#fff_50%,#f3f3f3_50%)]"><span class="h-0 w-0 border-x-[7px] border-t-[7px] border-x-transparent border-t-white"></span></div></div>
                    <div class="ml-[28px] flex h-[34px] border-b-2 border-[#f0f0f0]"><div class="w-[230px] bg-white pl-[8px] leading-[32px]">计算偏基台值</div><div class="ml-[2px] w-[310px] bg-white pl-[6px] text-[21px] leading-[32px]">True</div><div class="ml-[2px] flex w-[32px] items-center justify-center bg-[linear-gradient(#fff_50%,#f3f3f3_50%)]"><span class="h-0 w-0 border-x-[7px] border-t-[7px] border-x-transparent border-t-white"></span></div></div>
                    <div class="ml-[28px] flex h-[34px] border-b-2 border-[#f0f0f0] text-[#a8a8a8]"><div class="w-[230px] bg-white pl-[8px] leading-[32px]">偏基台值</div><div class="ml-[2px] flex-1 bg-white pl-[6px] text-[21px] leading-[32px]">24.09803</div></div>
                    <div class="flex h-[34px] items-center bg-[linear-gradient(#f0f0f0_50%,#ebebeb_50%)] pl-[5px] font-bold"><span class="relative flex h-[18px] w-[18px] items-center justify-center border-2 border-[#444]"><span class="h-[2px] w-[10px] bg-[#222]"></span><span class="absolute h-[10px] w-[2px] bg-[#222]"></span></span><span class="ml-[16px]">模型 #2</span></div>
                    <div class="flex h-[34px] items-center bg-[linear-gradient(#f0f0f0_50%,#ebebeb_50%)] pl-[5px] font-bold"><span class="relative flex h-[18px] w-[18px] items-center justify-center border-2 border-[#444]"><span class="h-[2px] w-[10px] bg-[#222]"></span><span class="absolute h-[10px] w-[2px] bg-[#222]"></span></span><span class="ml-[16px]">模型 #3</span></div>
                    <div class="flex h-[34px] items-center bg-[linear-gradient(#f0f0f0_50%,#ebebeb_50%)] pl-[5px] font-bold"><span class="flex h-[18px] w-[18px] items-center justify-center border-2 border-[#444]"><span class="h-[2px] w-[10px] bg-[#222]"></span></span><span class="ml-[16px] text-[25px]">步长</span></div>
                    <div class="ml-[28px] flex h-[34px] border-b-2 border-[#808080] bg-white"><div class="w-[230px] pl-[8px] leading-[32px]">步长大小</div><div class="ml-[2px] flex-1 pl-[6px] text-[21px] leading-[32px]">1.5</div></div>
                    <div class="ml-[26px] flex h-[34px] border-2 border-t-0 border-[#808080] bg-white"><div class="w-[230px] bg-[#3576d0] pl-[8px] leading-[32px] text-white">步长数</div><div class="ml-[2px] flex-1 pl-[6px] text-[21px] leading-[32px]">20</div><div class="flex w-[32px] items-center justify-center bg-[linear-gradient(#fff_50%,#ececec_50%)]"><span class="h-0 w-0 border-x-[6px] border-t-[8px] border-x-transparent border-t-black"></span></div></div>
                </div>
                <div class="flex-1"></div>
                <div class="h-[8px] shrink-0 border-y-2 border-[#a0a0a0] bg-white"></div>
                <div class="h-[89px] shrink-0 overflow-hidden bg-[#f0f0f0] pl-[8px] pr-[2px] pt-[5px]">
                    <div class="flex items-center justify-between"><span class="text-[25px] font-bold">步长数</span><span class="text-[#1a1af0]">&lt;更多(M)&gt;</span></div>
                    <p class="mt-[3px] whitespace-nowrap leading-[26px]">缩略图的规则是将步长大小与步长数相乘，它应该为所<br>有点之间最大距离的一半左右。同时，如果拟合的半...</p>
                </div>
            </div>
        </div>

        <div class="mt-[21px] h-[4px] shrink-0 border-t-2 border-[#a0a0a0] bg-white"></div>
        <!-- wizard buttons -->
        <div class="mt-[17px] flex shrink-0 items-center pl-[1424px]">
            <button class="h-[40px] w-[143px] rounded-[6px] border-2 border-[#d0d0d0] bg-[#fdfdfd]">&lt; 上一步(B)</button>
            <button class="ml-[7px] h-[40px] w-[144px] rounded-[6px] border-2 border-[#2a6fc0] bg-[#fdfdfd]">下一步(N) &gt;</button>
            <button class="ml-[18px] h-[40px] w-[144px] rounded-[6px] border-2 border-[#d0d0d0] bg-[#fdfdfd]">完成(F)</button>
            <button class="ml-[32px] h-[40px] w-[143px] rounded-[6px] border-2 border-[#d0d0d0] bg-[#fdfdfd]">取消</button>
        </div>
        <svg width="16" height="16" viewBox="0 0 16 16" fill="#c8c8c8" class="absolute bottom-[2px] right-[2px]"><rect x="11" y="1" width="4" height="4"/><rect x="6" y="6" width="4" height="4"/><rect x="11" y="6" width="4" height="4"/><rect x="1" y="11" width="4" height="4"/><rect x="6" y="11" width="4" height="4"/><rect x="11" y="11" width="4" height="4"/></svg>
    </div>

    <!-- red annotation drawn over the screenshot -->
    <div class="absolute left-[1884px] top-[781px] h-[112px] w-[625px] rounded-[10px] border-[6px] border-[#e8412a]"></div>
</div>

<script>
    const NS = 'http://www.w3.org/2000/svg';
    function add(parent, tag, attrs, text) {
        const el = document.createElementNS(NS, tag);
        for (const k in attrs) el.setAttribute(k, attrs[k]);
        if (text) el.textContent = text;
        parent.appendChild(el);
        return el;
    }

    // semivariogram chart, in page coordinates
    const chart = document.getElementById('chart');
    const L = 541, R = 1820, T = 333, B = 1065, stepY = (B - T) / 11;
    add(chart, 'rect', {x: L, y: T, width: R - L, height: B - T, fill: '#f7f7f7'});
    const grid = {stroke: '#999', 'stroke-width': 2, 'stroke-dasharray': '2 3'};
    for (let i = 1; i < 11; i++) {
        add(chart, 'line', {x1: L, x2: R, y1: T + i * stepY, y2: T + i * stepY, ...grid});
        const x = L + i * (R - L) / 11;
        add(chart, 'line', {x1: x, x2: x, y1: T, y2: B, ...grid});
    }
    add(chart, 'path', {d: `M${L} ${B}V${T}H${R}V${B}`, fill: 'none', stroke: '#a0a0a0', 'stroke-width': 2});
    add(chart, 'line', {x1: L, x2: R, y1: B, y2: B, stroke: '#808080', 'stroke-width': 2});

    const mono = "font-family:'Liberation Mono',monospace;font-size:22px;letter-spacing:-1.6px";
    const yLabels = ['1.305', '1.186', '1.067', '0.949', '0.83', '0.712', '0.593', '0.474', '0.356', '0.237', '0.119', '0'];
    yLabels.forEach((t, i) => add(chart, 'text', {x: 527, y: T + i * stepY + 5, 'text-anchor': 'end', style: mono}, t));
    const xLabels = [[517, '0'], [654, '0.273'], [771, '0.545'], [889, '0.818'], [1005, '1.091'], [1121, '1.364'], [1236, '1.636'], [1355, '1.909'], [1470, '2.182'], [1586, '2.455'], [1702, '2.727'], [1818, '3']];
    xLabels.forEach(([x, t]) => add(chart, 'text', {x, y: 1091, 'text-anchor': 'middle', style: mono}, t));
    add(chart, 'text', {x: 488, y: 297, style: "font-family:'Liberation Mono',monospace;font-size:22px"}, 'γ');
    add(chart, 'text', {x: 529, y: 297, style: mono}, '·');
    add(chart, 'text', {x: 544, y: 298, style: mono}, '10');
    add(chart, 'text', {x: 572, y: 290, style: "font-family:'Liberation Mono',monospace;font-size:22px"}, '−2');

    // cloud points: left part read off the reference, right part filled from a seeded sequence
    const redPts = [[353,1398],[479,1275],[479,1388],[555,1237],[555,1265],[618,1300],[668,1193],[668,1225],[757,1165],[757,1242],[797,1122],[797,1175],[797,1205],[868,1178],[868,1195],[900,1212],[932,1086],[932,1122],[959,1115],[959,1193],[990,1086],[990,1135],[990,1158],[1044,1058],[1066,1050],[1066,1085],[1066,1125],[1066,1148],[1044,1143],[1044,1182],[1066,1182],[1115,1002],[1115,1105],[1115,1120],[1165,1007],[1165,1163],[1187,972],[1187,1027],[1205,1020],[1205,1050],[1187,1120],[1205,1115],[1187,1160],[1187,1172],[1250,1014],[1268,995],[1268,917],[1250,1068],[1250,1103],[1268,1103],[1250,1122],[1268,1187],[1308,977],[1330,995],[1348,985],[1308,1030],[1348,1025],[1348,1075],[1308,1100],[1330,1120],[1330,1147],[1348,1133],[1366,1128],[1308,1177],[1366,882],[1384,930],[1384,977],[1384,1040],[1384,1090],[1384,1145],[1384,1200],[1438,965],[1438,1040],[1438,1075],[1438,1200],[1468,863],[1468,925],[1468,940],[1486,925],[1505,912],[1523,905],[1505,930],[1523,985],[1487,1063],[1505,1090],[1523,1067],[1468,1125],[1468,1160],[1468,1170],[1487,1163],[1505,1182],[1523,1158]]
        .map(([x, y]) => [430 + x / 2.24, 140 + y / 3]);
    [[1335,100],[1395,130],[1427,143],[1427,203],[1438,203],[1246,182],[1154,190],[1287,197]]
        .forEach(([x, y]) => redPts.push([1100 + x / 2.01, 300 + y / 3]));
    let seed = 20231;
    const rnd = () => (seed = (seed * 16807) % 2147483647) / 2147483647;
    for (let i = 0; i < 560; i++) {
        const x = 1120 + Math.floor(rnd() * 233) * 3;
        const band = rnd();
        let y;
        if (x < 1500) {
            y = band < 0.2 ? 380 + rnd() * 50 : 430 + rnd() * 120;
        } else {
            const top = x > 1640 ? 360 : 372;
            if (band < 0.18) y = top + rnd() * (470 - top);
            else if (band < 0.3) y = 470 + rnd() * 34;
            else if (band < 0.92) y = 504 + rnd() * 24;
            else y = 528 + rnd() * 20;
        }
        redPts.push([x, y]);
    }
    redPts.forEach(([x, y]) => add(chart, 'ellipse', {cx: x, cy: y, rx: 3, ry: 4, fill: '#c0241c'}));

    const curve = 'M541 614L574 605L637 581L702 561L766 542L830 528L894 511L959 498L1022 490L1086 483L1150 480L1820 479';
    add(chart, 'path', {d: curve, fill: 'none', stroke: '#8888c8', 'stroke-width': 6});
    const plusPts = [[574,609],[638,580],[702,559],[766,537],[830,527],[894,508],[959,498],[1022,492],[1086,483],[1150,474],[1214,474],[1278,468],[1342,476],[1406,476],[1470,481],[1534,488],[1598,490],[1662,485],[1726,483],[1790,476]];
    plusPts.forEach(([x, y]) => add(chart, 'path', {d: `M${x} ${y-14}v28M${x-12} ${y}h24`, stroke: '#9c9cff', 'stroke-width': 9}));
    plusPts.forEach(([x, y]) => add(chart, 'path', {d: `M${x} ${y-13}v26M${x-11} ${y}h22`, stroke: '#0000f0', 'stroke-width': 6}));
    add(chart, 'path', {d: curve, fill: 'none', stroke: '#00008c', 'stroke-width': 3});

    // semivariogram surface, rows read off the reference as [y0, y1, x0, x1, x0, x1 ...]
    const map = document.getElementById('map');
    const g = add(map, 'g', {transform: 'translate(430 1040) scale(0.5102 0.3571)', 'shape-rendering': 'crispEdges'});
    const base = [[430,458,1078,1227],[458,482,1007,1298],[482,510,972,1337],[510,538,953,1352],[538,560,917,1388],[560,588,898,1407],[588,616,878,1427],[616,666,862,1443],[666,694,843,1462],[694,745,823,1482],[745,846,808,1497],[846,1057,788,1517],[1057,1159,808,1497],[1159,1215,823,1482],[1215,1238,843,1462],[1238,1288,862,1443],[1288,1316,878,1427],[1316,1344,898,1407],[1344,1366,917,1388],[1366,1394,953,1352],[1394,1422,972,1337],[1422,1444,1007,1298],[1444,1472,1078,1227]];
    const dark = [[430,458,1078,1117,1172,1188],[458,482,1007,1043],[482,510,972,1043],[510,538,953,1078],[538,560,917,1043],[560,588,898,1043],[588,616,878,1062],[616,666,862,1078],[666,694,843,1078],[694,717,823,1078],[717,745,823,878,898,1078],[745,767,808,823,843,862,898,1078],[767,795,917,1078],[795,846,933,1062],[846,980,953,1007],[980,1002,972,1007],[902,924,1298,1337],[924,1057,1298,1352],[1057,1108,1243,1372],[1108,1136,1227,1388],[1136,1159,1227,1407,1443,1462,1482,1497],[1159,1187,1227,1407,1427,1482],[1187,1215,1227,1482],[1215,1238,1227,1462],[1238,1288,1227,1443],[1288,1316,1243,1427],[1316,1344,1262,1407],[1344,1366,1262,1388],[1366,1394,1227,1352],[1394,1422,1262,1337],[1422,1444,1262,1298],[1444,1472,1117,1133,1188,1227]];
    const drawRows = (rows, fill) => rows.forEach(r => {
        for (let i = 2; i < r.length; i += 2) add(g, 'rect', {x: r[i], y: r[0], width: r[i + 1] - r[i], height: r[1] - r[0], fill});
    });
    drawRows(base, '#e09a42');
    drawRows(dark, '#d45b28');
    drawRows([[902,1002,1133,1172]], '#f0d868');
    add(map, 'circle', {cx: 1019, cy: 1381, r: 88, fill: 'none', stroke: '#2a1fc0', 'stroke-width': 2});
</script>
</body>
</html>
